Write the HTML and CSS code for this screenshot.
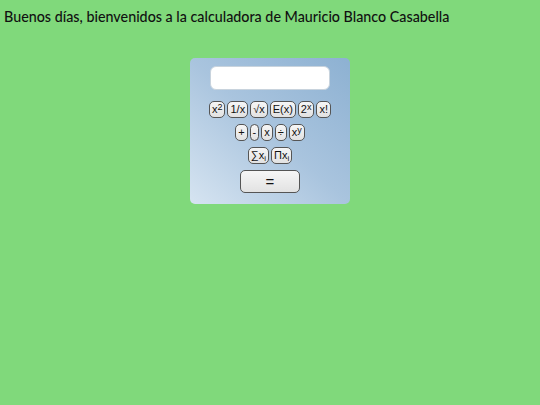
FILE: index.html
```html
<!DOCTYPE html>
<html>
<head>
<meta charset="utf-8">
<link rel="stylesheet" href="styles.css">
</head>
<body>
<h1 class="title">Buenos días, bienvenidos a la calculadora de Mauricio Blanco Casabella</h1>
<div class="calc">
  <div class="display"></div>
  <div class="row r1">
    <span class="btn">x<sup>2</sup></span>
    <span class="btn">1/x</span>
    <span class="btn">√x</span>
    <span class="btn">E(x)</span>
    <span class="btn">2<sup>x</sup></span>
    <span class="btn">x!</span>
  </div>
  <div class="row r2">
    <span class="btn">+</span>
    <span class="btn">-</span>
    <span class="btn">x</span>
    <span class="btn">÷</span>
    <span class="btn">x<sup>y</sup></span>
  </div>
  <div class="row r3">
    <span class="btn">∑x<sub>i</sub></span>
    <span class="btn">Πx<sub>i</sub></span>
  </div>
  <div class="row r4">
    <span class="btn eq">=</span>
  </div>
</div>
</body>
</html>
```
FILE: styles.css
```css
html, body { margin: 0; padding: 0; }
body {
  background: #80d97b;
  width: 540px;
  height: 405px;
  font-family: "Liberation Sans", Arial, sans-serif;
}
.title {
  margin: 0;
  padding: 8px 0 0 4px;
  font-family: Lato, "Open Sans", sans-serif;
  font-weight: 500;
  font-size: 14.3px;
  line-height: 17px;
  color: #111;
}
.calc {
  width: 160px;
  height: 146px;
  margin: 33px 0 0 190px;
  box-sizing: border-box;
  border-radius: 5px;
  background: linear-gradient(to top right, #d6e4f1 0%, #a9c4de 50%, #8db1d2 100%);
  display: flex;
  flex-direction: column;
  align-items: center;
  padding-top: 8px;
}
.display {
  width: 120px;
  height: 24px;
  box-sizing: border-box;
  background: #fff;
  border: 1px solid #c8d3dd;
  border-radius: 6px;
}
.row {
  display: flex;
  gap: 2px;
  justify-content: center;
}
.r1 { margin-top: 11px; }
.r2 { margin-top: 6px; }
.r3 { margin-top: 6px; }
.r4 { margin-top: 6px; }
.btn {
  height: 17px;
  box-sizing: border-box;
  padding: 0 2px;
  border: 1px solid #555;
  border-radius: 5px;
  background: linear-gradient(#f6f6f6, #e2e2e2);
  font-size: 11px;
  line-height: 15px;
  color: #111;
  display: flex;
  align-items: center;
}
.btn sup { font-size: 9px; line-height: 0; position: relative; top: -3px; vertical-align: baseline; }
.btn sub { font-size: 8px; line-height: 0; position: relative; top: 3px; vertical-align: baseline; }
.eq {
  width: 60px;
  height: 23px;
  justify-content: center;
  font-size: 15px;
  border-radius: 5px;
}
```
